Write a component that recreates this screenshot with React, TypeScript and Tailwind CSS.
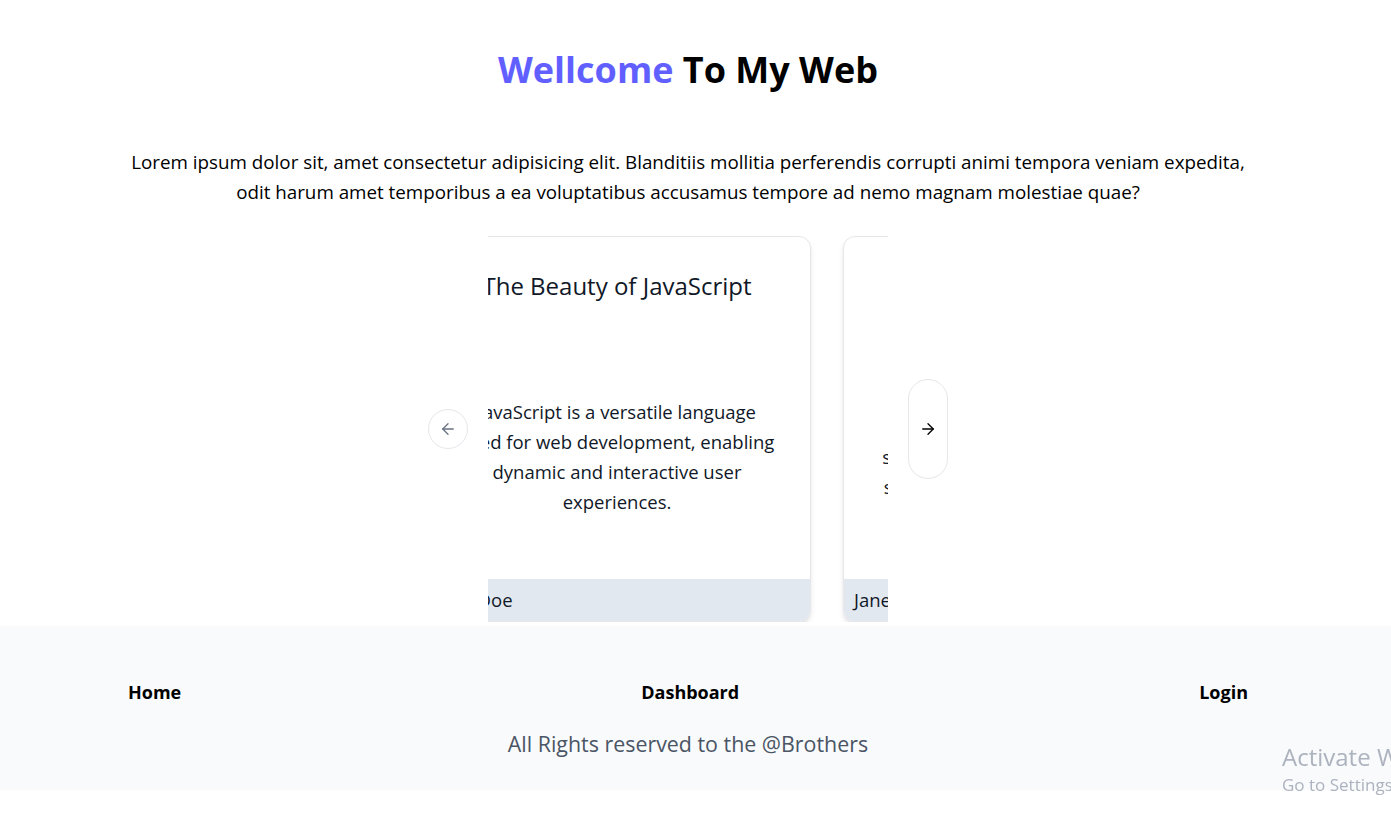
import React from "react";
import { ArrowLeft, ArrowRight } from "lucide-react";

// --- Karten-Daten (Zeilenumbrüche fest vorgegeben) ---
const posts = [
  {
    title: "The Beauty of JavaScript",
    body: ["JavaScript is a versatile language", "used for web development, enabling", "dynamic and interactive user", "experiences."],
    author: "John Doe",
  },
  {
    title: "Python Basics",
    body: ["Python is loved by beginners", "since its syntax is clean and elegant,", "so scripts stay simple and readable."],
    author: "Jane Smith",
  },
  {
    title: "Learning React",
    body: ["React makes it painless to create", "interactive UIs with reusable", "components."],
    author: "Alex Brown",
  },
];

const Card: React.FC<{ title: string; body: string[]; author: string }> = ({ title, body, author }) => (
  <div className="w-[388px] h-[386px] shrink-0 flex flex-col rounded-xl border border-gray-200 bg-white shadow-md overflow-hidden text-gray-900">
    <h2 className="pt-[33px] text-center text-[24px] leading-8 font-normal">{title}</h2>
    <div className="flex-1 flex items-center justify-center pt-[32px]">
      <p className="text-center text-[18.5px] leading-[30px] whitespace-nowrap">
        {body.map((line, i) => (
          <React.Fragment key={i}>
            {i > 0 && <br />}
            {line}
          </React.Fragment>
        ))}
      </p>
    </div>
    <div className="bg-slate-200 px-[10px] py-[7px] text-[18.5px] leading-7">{author}</div>
  </div>
);

const App: React.FC = () => {
  return (
    <div className="min-h-screen bg-white" style={{ fontFamily: '"Open Sans", "Noto Sans", sans-serif' }}>
      {/* --- Hauptbereich --- */}
      <main className="w-[1376px] px-32 pt-[50px]">
        <h1 className="text-center text-[36px] leading-10 font-bold text-black">
          <span className="text-indigo-500">Wellcome</span> To My Web
        </h1>
        <p className="mt-[57px] text-center text-[18.8px] leading-[30px] text-black">
          Lorem ipsum dolor sit, amet consectetur adipisicing elit. Blanditiis mollitia perferendis corrupti animi tempora veniam expedita, odit harum amet temporibus a ea voluptatibus accusamus tempore ad nemo magnam molestiae quae?
        </p>

        {/* --- Karussell --- */}
        <div className="mt-[29px] flex items-center justify-center gap-5">
          <button className="w-10 h-10 rounded-full border border-gray-200 bg-white flex items-center justify-center text-gray-500">
            <ArrowLeft size={18} strokeWidth={1.75} />
          </button>
          <div className="w-[400px] h-[386px] overflow-hidden">
            <div className="flex gap-8 -translate-x-[65px]">
              {posts.map((p) => (
                <Card key={p.author} {...p} />
              ))}
            </div>
          </div>
          <button className="w-10 h-[100px] rounded-full border border-gray-200 bg-white flex items-center justify-center text-black">
            <ArrowRight size={18} strokeWidth={1.75} />
          </button>
        </div>
      </main>

      {/* --- Footer --- */}
      <footer className="mt-1 bg-gray-50 h-[164px]">
        <div className="w-[1376px] px-32 pt-[52px]">
          <nav className="flex justify-between text-[18px] leading-7 font-bold text-black">
            <a href="#">Home</a>
            <a href="#">Dashboard</a>
            <a href="#">Login</a>
          </nav>
          <p className="mt-6 text-center text-[21.4px] leading-7 text-gray-600">All Rights reserved to the @Brothers</p>
        </div>
      </footer>

      {/* --- Windows-Wasserzeichen --- */}
      <div className="fixed left-[1282px] right-0 top-[741px] overflow-hidden whitespace-nowrap text-gray-400/80 pointer-events-none">
        <div className="text-[24px] leading-8">Activate Windows</div>
        <div className="text-[17px] leading-6">Go to Settings to activate Windows.</div>
      </div>
    </div>
  );
};

export default App;
